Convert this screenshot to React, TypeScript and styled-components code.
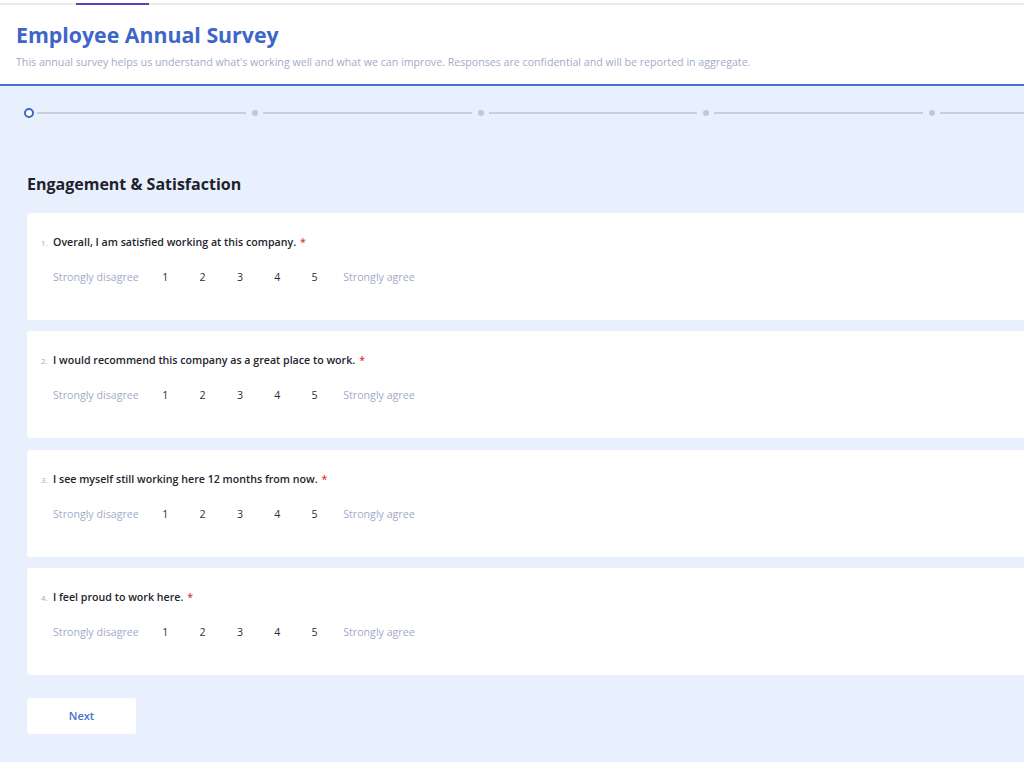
import * as React from 'react';
import styled, { createGlobalStyle } from 'styled-components';

const COLORS = {
    blue: '#3d66c8',
    headerLine: '#4b6fd0',
    bg: '#e9f0fd',
    muted: '#a2abc8',
    stepLine: '#c6cfe0',
    stepDot: '#bfc8db',
    text: '#1f222b',
    red: '#e0393e',
};

const GlobalStyle = createGlobalStyle`
    html, body {
        margin: 0;
        padding: 0;
        overflow-x: hidden;
        background: ${COLORS.bg};
    }
    body {
        font-family: 'Open Sans', 'Noto Sans', 'Liberation Sans', sans-serif;
        color: ${COLORS.text};
    }
`;

const Page = styled.div`
    width: 1150px;
    min-height: 762px;
    background: ${COLORS.bg};
`;

const TopBar = styled.div`
    height: 3px;
    background: #fff;
`;

const TabStrip = styled.div`
    height: 2px;
    background: #ececef;
    padding-left: 76px;
`;

const TabIndicator = styled.div`
    width: 73px;
    height: 2px;
    background: #5b3fc8;
`;

const Header = styled.header`
    background: #fff;
    padding: 15px 16px 0;
    height: 64px;
    border-bottom: 2px solid ${COLORS.headerLine};
`;

const Title = styled.h1`
    margin: 0;
    font-size: 21.3px;
    line-height: 30px;
    font-weight: 700;
    color: ${COLORS.blue};
`;

const Subtitle = styled.p`
    margin: 4px 0 0;
    font-size: 10.65px;
    line-height: 16px;
    color: ${COLORS.muted};
`;

const Main = styled.main`
    padding: 22px 0 28px 27px;
`;

const Stepper = styled.div`
    display: flex;
    width: 1129px;
    margin-left: -3px;
`;

const Step = styled.div`
    flex: 1;
    display: flex;
    align-items: center;
`;

const Marker = styled.div`
    width: 10px;
    height: 10px;
    display: flex;
    align-items: center;
    justify-content: center;
    flex-shrink: 0;
`;

const Ring = styled.div`
    width: 6px;
    height: 6px;
    border-radius: 50%;
    border: 2.5px solid ${COLORS.blue};
    background: #fff;
`;

const Dot = styled.div`
    width: 6px;
    height: 6px;
    border-radius: 50%;
    background: ${COLORS.stepDot};
`;

const StepLine = styled.div`
    flex: 1;
    height: 2px;
    margin: 0 4px 0 3px;
    background: ${COLORS.stepLine};
`;

const SectionTitle = styled.h2`
    margin: 55px 0 18px;
    font-size: 16px;
    line-height: 22px;
    font-weight: 700;
    color: ${COLORS.text};
`;

const Questions = styled.div`
    display: flex;
    flex-direction: column;
    gap: 11.3px;
`;

const Card = styled.div`
    background: #fff;
    border-radius: 3px;
    height: 107px;
    box-sizing: border-box;
    padding: 21px 14px 0;
`;

const QuestionLine = styled.div`
    display: flex;
    align-items: baseline;
    font-size: 10.65px;
    line-height: 16px;
    font-weight: 600;
    color: #23252d;
`;

const QNum = styled.span`
    width: 12px;
    font-size: 8px;
    font-weight: 400;
    color: ${COLORS.muted};
`;

const Required = styled.span`
    color: ${COLORS.red};
    margin-left: 4px;
`;

const Scale = styled.div`
    display: flex;
    align-items: center;
    margin: 16px 0 0 12px;
    height: 20px;
    font-size: 10.65px;
`;

const ScaleLabel = styled.span`
    color: ${COLORS.muted};
`;

const Options = styled.div`
    display: flex;
    margin: 0 10px 0 8px;
`;

const Option = styled.span`
    width: 37.3px;
    text-align: center;
    color: #2c2f38;
`;

const NextButton = styled.button`
    margin-top: 23px;
    width: 109px;
    height: 36px;
    border: none;
    border-radius: 3px;
    background: #fff;
    font-family: inherit;
    font-size: 11px;
    font-weight: 600;
    color: ${COLORS.headerLine};
    cursor: pointer;
`;

const QUESTIONS = [
    'Overall, I am satisfied working at this company.',
    'I would recommend this company as a great place to work.',
    'I see myself still working here 12 months from now.',
    'I feel proud to work here.',
];

const App = (): React.ReactNode => (
    <Page>
        <GlobalStyle />
        <TopBar />
        <TabStrip>
            <TabIndicator />
        </TabStrip>
        <Header>
            <Title>Employee Annual Survey</Title>
            <Subtitle>
                This annual survey helps us understand what&apos;s working well and what we can improve. Responses are
                confidential and will be reported in aggregate.
            </Subtitle>
        </Header>
        <Main>
            <Stepper>
                {[0, 1, 2, 3, 4].map((i) => (
                    <Step key={i}>
                        <Marker>{i === 0 ? <Ring /> : <Dot />}</Marker>
                        <StepLine />
                    </Step>
                ))}
            </Stepper>
            <SectionTitle>Engagement &amp; Satisfaction</SectionTitle>
            <Questions>
                {QUESTIONS.map((q, i) => (
                    <Card key={q}>
                        <QuestionLine>
                            <QNum>{i + 1}.</QNum>
                            {q}
                            <Required>*</Required>
                        </QuestionLine>
                        <Scale>
                            <ScaleLabel>Strongly disagree</ScaleLabel>
                            <Options>
                                {[1, 2, 3, 4, 5].map((n) => (
                                    <Option key={n}>{n}</Option>
                                ))}
                            </Options>
                            <ScaleLabel>Strongly agree</ScaleLabel>
                        </Scale>
                    </Card>
                ))}
            </Questions>
            <NextButton>Next</NextButton>
        </Main>
    </Page>
);

export default App;
